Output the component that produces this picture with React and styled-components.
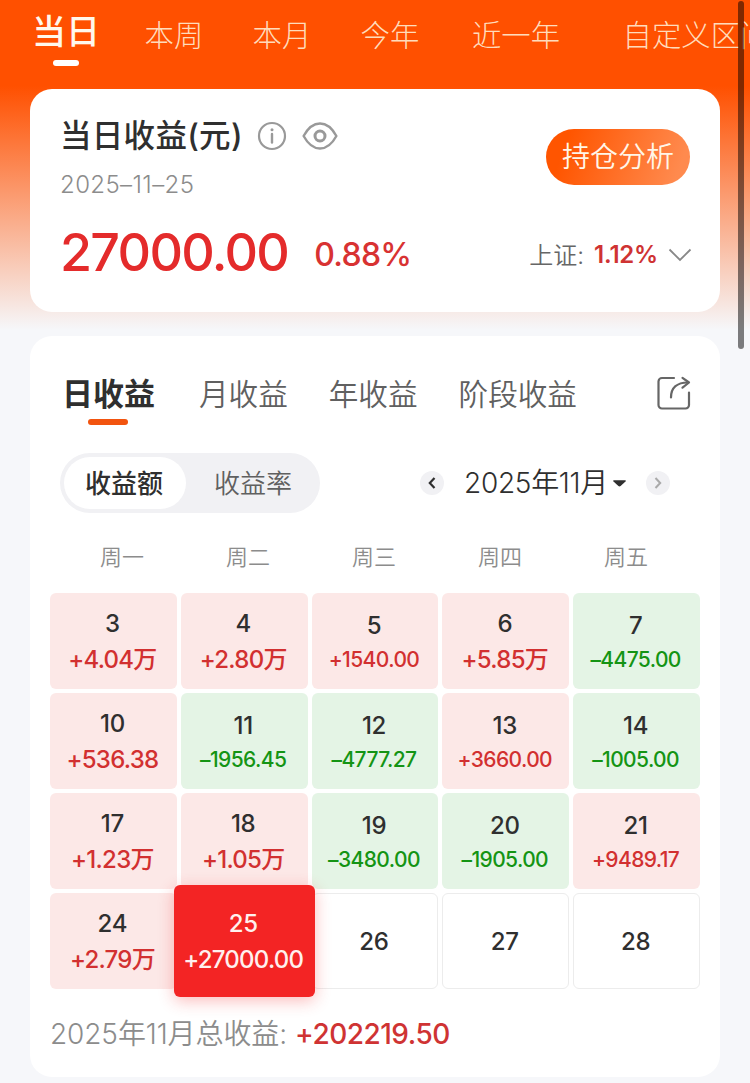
import React from 'react';
import styled, { createGlobalStyle, css } from 'styled-components';

const GlobalStyle = createGlobalStyle`
  * {
    box-sizing: border-box;
  }

  body {
    margin: 0;
    background: #f6f7fa;
    font-family: Inter, 'Noto Sans CJK SC', sans-serif;
    color: #2f2f2f;
  }
`;

const Page = styled.div`
  position: relative;
  width: 750px;
  height: 1083px;
  overflow: hidden;
  background: linear-gradient(180deg, #ff5000 0, #ff5000 86px, #f6f7fa 330px);
`;

const ScrollThumb = styled.div`
  position: absolute;
  top: 1px;
  right: 6px;
  width: 6px;
  height: 348px;
  border-radius: 3px;
  background: rgba(0, 0, 0, 0.5);
`;

const PeriodTabs = styled.nav`
  display: flex;
  height: 89px;
  padding-left: 12px;
`;

const PeriodTab = styled.div`
  flex: none;
  display: flex;
  flex-direction: column;
  align-items: center;
  width: ${({ $chars }) => $chars * 36 + 36}px;
  font-size: ${({ $active }) => ($active ? 34 : 29.4)}px;
  font-weight: ${({ $active }) => ($active ? 500 : 300)};
  line-height: ${({ $active }) => ($active ? 64 : 72)}px;
  color: ${({ $active }) => ($active ? '#fff8ec' : '#ffdcbc')};
  white-space: nowrap;

  &::after {
    content: '';
    display: ${({ $active }) => ($active ? 'block' : 'none')};
    width: 26px;
    height: 6px;
    margin-top: -4px;
    border-radius: 3px;
    background: #fff;
  }
`;

const Card = styled.section`
  margin: 0 30px 24px;
  border-radius: 22px;
  background: #fff;
`;

const SummaryCard = styled(Card)`
  height: 223px;
  padding: 24px 29px 0 30px;
`;

const SummaryTop = styled.div`
  display: flex;
  justify-content: space-between;
  height: 106px;
`;

const TitleRow = styled.div`
  display: flex;
  align-items: center;
  height: 46px;
`;

const Title = styled.h1`
  margin: 0 14px 0 0;
  font-size: 31.5px;
  font-weight: 500;
  line-height: 48px;
  letter-spacing: 0.3px;
`;

const EyeSlot = styled.span`
  display: flex;
  margin-left: 15px;
`;

const DateText = styled.div`
  font-size: 24px;
  font-weight: 300;
  line-height: 51px;
  letter-spacing: 0.4px;
  color: #8c8c8c;
`;

const AnalyzeButton = styled.button`
  width: 144px;
  height: 56px;
  margin: 16px 1px 0 0;
  padding: 0;
  border: 0;
  border-radius: 28px;
  background: linear-gradient(110deg, #ff5500 15%, #ff8a4e 90%);
  font: 350 28px/56px Inter, 'Noto Sans CJK SC', sans-serif;
  color: #fff6e8;
`;

const SummaryBottom = styled.div`
  display: flex;
  align-items: center;
  height: 66px;
`;

const Amount = styled.span`
  font-size: 52px;
  font-weight: 500;
  letter-spacing: -1.7px;
  color: #e42b2b;
`;

const Percent = styled.span`
  margin: 4px 0 0 26px;
  font-size: 32px;
  font-weight: 500;
  letter-spacing: -0.7px;
  color: #d83232;
`;

const IndexBox = styled.div`
  display: flex;
  align-items: center;
  gap: 10px;
  margin: 5px -1px 0 auto;
  font-size: 24px;
  color: #666;
`;

const IndexName = styled.span`
  margin-top: -3px;
  font-weight: 350;
`;

const IndexValue = styled.span`
  font-weight: 600;
  letter-spacing: -0.2px;
  color: #cf3333;
`;

const CalendarCard = styled(Card)`
  height: 741px;
  padding: 27px 20px 0;
`;

const ProfitTabs = styled.div`
  display: flex;
  height: 90px;
  padding: 0 9px 0 12px;
`;

const ProfitTab = styled.div`
  display: flex;
  flex-direction: column;
  align-items: center;
  margin-right: ${({ $active }) => ($active ? 44 : 41)}px;
  font-size: ${({ $active }) => ($active ? 31 : 29.6)}px;
  font-weight: ${({ $active }) => ($active ? 700 : 350)};
  line-height: 62px;
  color: ${({ $active }) => ($active ? '#2f2f2f' : '#606060')};

  &::after {
    content: '';
    display: ${({ $active }) => ($active ? 'block' : 'none')};
    width: 40px;
    height: 6px;
    margin: -6px 2px 0 0;
    border-radius: 3px;
    background: #f2540f;
  }
`;

const ShareSlot = styled.span`
  margin: 13px 0 0 auto;
`;

const Controls = styled.div`
  display: flex;
  align-items: center;
  justify-content: space-between;
  height: 60px;
  padding: 0 30px 0 10px;
`;

const Segment = styled.div`
  display: flex;
  width: 260px;
  height: 60px;
  padding: 4px 0 4px 4px;
  border-radius: 30px;
  background: #f1f1f4;
`;

const SegmentItem = styled.div`
  flex: ${({ $active }) => ($active ? '0 0 122px' : '1')};
  padding-right: ${({ $active }) => ($active ? 2 : 0)}px;
  border-radius: 26px;
  background: ${({ $active }) => ($active ? '#fff' : 'transparent')};
  font-size: 26px;
  font-weight: ${({ $active }) => ($active ? 500 : 350)};
  line-height: 53px;
  text-align: center;
  color: ${({ $active }) => ($active ? '#2f2f2f' : '#606060')};
`;

const MonthPicker = styled.div`
  display: flex;
  align-items: center;
`;

const RoundButton = styled.span`
  display: flex;
  align-items: center;
  justify-content: center;
  width: 24px;
  height: 24px;
  border-radius: 50%;
  background: #f1f1f4;
`;

const Month = styled.span`
  display: flex;
  align-items: center;
  gap: 5px;
  margin: 0 20px 0 20px;
  font-size: 28px;
  font-weight: 350;
  line-height: 40px;
  letter-spacing: -0.3px;
`;

const Weekdays = styled.div`
  display: grid;
  grid-template-columns: repeat(5, 126px);
  height: 80px;
  padding-left: 9px;
  font-size: 22px;
  font-weight: 350;
  line-height: 89px;
  text-align: center;
  color: #8c8c8c;
`;

const Grid = styled.div`
  display: grid;
  grid-template-columns: repeat(5, 1fr);
  grid-auto-rows: 96px;
  gap: 4px;
`;

const tones = {
  up: css`
    background: #fce8e7;
    --value: #d23030;
  `,
  down: css`
    background: #e4f4e5;
    --value: #149414;
  `,
  empty: css`
    border: 1px solid #ececec;
  `,
  selected: css`
    z-index: 1;
    margin: -8px -7px;
    background: #f32424;
    box-shadow: 0 4px 16px rgba(243, 36, 36, 0.3);
    color: #fff0ee;
    --value: #fff0ee;
  `,
};

const Day = styled.div`
  display: flex;
  flex-direction: column;
  align-items: center;
  justify-content: center;
  padding: 1px 2px 0 0;
  border-radius: 6px;
  font-size: 24px;
  font-weight: 500;
  line-height: 36px;
  letter-spacing: -0.3px;
  ${({ $tone }) => tones[$tone]}
`;

const DayValue = styled.span`
  font-size: ${({ $small }) => ($small ? 21 : 24)}px;
  line-height: ${({ $small }) => ($small ? 31 : 36)}px;
  letter-spacing: ${({ $small }) => ($small ? -0.6 : -0.75)}px;
  white-space: nowrap;
  color: var(--value);
`;

const Total = styled.div`
  padding-top: 25px;
  font-size: 28px;
  font-weight: 350;
  line-height: 40px;
  letter-spacing: -0.1px;
  color: #8c8c8c;
`;

const TotalValue = styled.span`
  margin-left: 8px;
  font-weight: 550;
  letter-spacing: -0.5px;
  color: #cf3333;
`;

const periods = ['当日', '本周', '本月', '今年', '近一年', '自定义区间'];
const profitTabs = ['日收益', '月收益', '年收益', '阶段收益'];
const weekdays = ['周一', '周二', '周三', '周四', '周五'];

const days = [
  { day: 3, value: '+4.04万' },
  { day: 4, value: '+2.80万' },
  { day: 5, value: '+1540.00' },
  { day: 6, value: '+5.85万' },
  { day: 7, value: '–4475.00' },
  { day: 10, value: '+536.38' },
  { day: 11, value: '–1956.45' },
  { day: 12, value: '–4777.27' },
  { day: 13, value: '+3660.00' },
  { day: 14, value: '–1005.00' },
  { day: 17, value: '+1.23万' },
  { day: 18, value: '+1.05万' },
  { day: 19, value: '–3480.00' },
  { day: 20, value: '–1905.00' },
  { day: 21, value: '+9489.17' },
  { day: 24, value: '+2.79万' },
  { day: 25, value: '+27000.00', selected: true },
  { day: 26 },
  { day: 27 },
  { day: 28 },
];

function getTone({ value, selected }) {
  if (selected) return 'selected';
  if (!value) return 'empty';
  return value.startsWith('+') ? 'up' : 'down';
}

function InfoIcon() {
  return (
    <svg width="30" height="30" viewBox="0 0 30 30" fill="none" stroke="#999" strokeWidth="2.2">
      <circle cx="15" cy="15" r="13" />
      <path d="M15 13v8.500" strokeWidth="2.400" strokeLinecap="round" />
      <circle cx="15" cy="8.800" r="1.500" fill="#999" stroke="none" />
    </svg>
  );
}

function EyeIcon() {
  return (
    <svg width="36" height="28" viewBox="0 0 36 28" fill="none" stroke="#999">
      <path
        d="M1.600 14C6 6 11.500 1.500 18 1.500S30 6 34.400 14C30 22 24.500 26.500 18 26.500S6 22 1.600 14Z"
        strokeWidth="2.400"
        strokeLinejoin="round"
      />
      <circle cx="18" cy="14" r="5" strokeWidth="3" />
    </svg>
  );
}

function ShareIcon() {
  return (
    <svg width="34" height="34" viewBox="0 0 34 34" fill="none" stroke="#666" strokeWidth="2.2" strokeLinecap="round" strokeLinejoin="round">
      <path d="M17 2H5a3.500 3.500 0 0 0-3.500 3.500V29A3.500 3.500 0 0 0 5 32.500h23.500A3.500 3.500 0 0 0 32 29V16.500" />
      <path d="M14 21.500C14 12 19.500 6.500 31 6.500" />
      <path d="M25.500 1.800 32 6.500l-6.500 5.200" />
    </svg>
  );
}

function App() {
  return (
    <>
      <GlobalStyle />
      <Page>
        <PeriodTabs>
          {periods.map((label, i) => (
            <PeriodTab key={label} $chars={label.length} $active={i === 0}>
              {label}
            </PeriodTab>
          ))}
        </PeriodTabs>

        <SummaryCard>
          <SummaryTop>
            <div>
              <TitleRow>
                <Title>当日收益(元)</Title>
                <InfoIcon />
                <EyeSlot>
                  <EyeIcon />
                </EyeSlot>
              </TitleRow>
              <DateText>2025–11–25</DateText>
            </div>
            <AnalyzeButton>持仓分析</AnalyzeButton>
          </SummaryTop>
          <SummaryBottom>
            <Amount>27000.00</Amount>
            <Percent>0.88%</Percent>
            <IndexBox>
              <IndexName>上证:</IndexName>
              <IndexValue>1.12%</IndexValue>
              <svg width="24" height="14" viewBox="0 0 24 14" fill="none" stroke="#888" strokeWidth="1.8">
                <path d="M1.500 1.500 12 12 22.500 1.500" />
              </svg>
            </IndexBox>
          </SummaryBottom>
        </SummaryCard>

        <CalendarCard>
          <ProfitTabs>
            {profitTabs.map((label, i) => (
              <ProfitTab key={label} $active={i === 0}>
                {label}
              </ProfitTab>
            ))}
            <ShareSlot>
              <ShareIcon />
            </ShareSlot>
          </ProfitTabs>

          <Controls>
            <Segment>
              <SegmentItem $active>收益额</SegmentItem>
              <SegmentItem>收益率</SegmentItem>
            </Segment>
            <MonthPicker>
              <RoundButton>
                <svg width="8" height="12" viewBox="0 0 8 12" fill="none" stroke="#2f2f2f" strokeWidth="2.2">
                  <path d="M6.500 1 1.800 6l4.700 5" />
                </svg>
              </RoundButton>
              <Month>
                2025年11月
                <svg width="13" height="7" viewBox="0 0 13 7" fill="#2f2f2f">
                  <path d="M1 .3h11c.8 0 1 .7.500 1.200L7.600 6c-.7.600-1.500.600-2.200 0L.500 1.500C0 1 .200.300 1 .300Z" />
                </svg>
              </Month>
              <RoundButton>
                <svg width="8" height="12" viewBox="0 0 8 12" fill="none" stroke="#aaa" strokeWidth="2">
                  <path d="M1.500 1 6.200 6l-4.700 5" />
                </svg>
              </RoundButton>
            </MonthPicker>
          </Controls>

          <Weekdays>
            {weekdays.map((name) => (
              <span key={name}>{name}</span>
            ))}
          </Weekdays>

          <Grid>
            {days.map((item) => (
              <Day key={item.day} $tone={getTone(item)}>
                <span>{item.day}</span>
                {item.value && (
                  <DayValue $small={!item.selected && item.value.length > 7}>{item.value}</DayValue>
                )}
              </Day>
            ))}
          </Grid>

          <Total>
            2025年11月总收益:
            <TotalValue>+202219.50</TotalValue>
          </Total>
        </CalendarCard>
        <ScrollThumb />
      </Page>
    </>
  );
}

export default App;
